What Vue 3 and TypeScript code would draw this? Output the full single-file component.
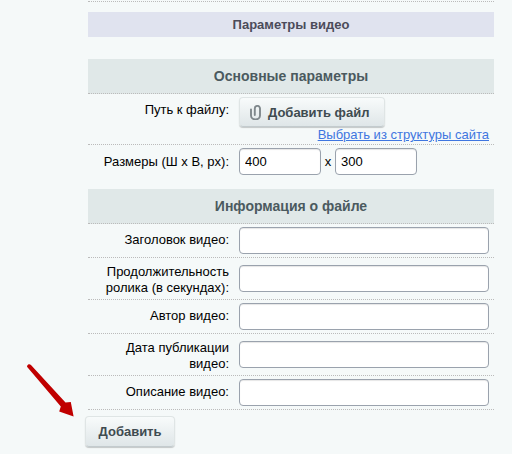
<script setup lang="ts">
const rows: { label: string[]; height: number }[] = [
  { label: ['Заголовок видео:'], height: 34 },
  { label: ['Продолжительность', 'ролика (в секундах):'], height: 42 },
  { label: ['Автор видео:'], height: 34 },
  { label: ['Дата публикации', 'видео:'], height: 42 },
  { label: ['Описание видео:'], height: 34 },
]
</script>

<template>
  <main class="page">
    <section class="form">
      <div class="top-rule"></div>
      <h2 class="title">Параметры видео</h2>
      <h3 class="heading first">Основные параметры</h3>
      <div class="row file-row">
        <div class="label file-label">Путь к файлу:</div>
        <div class="field">
          <button class="btn file-btn" type="button">
            <svg class="clip" width="11" height="15" viewBox="0 0 11 15" fill="none">
              <path d="M1 4.5V10.5a4.5 4 0 0 0 9 0V3.5a2.6 2.6 0 0 0-5.2 0V10" stroke="#7f888c" stroke-width="1.9" stroke-linecap="round" />
            </svg>
            Добавить файл
          </button>
          <a class="link" href="#">Выбрать из структуры сайта</a>
        </div>
      </div>
      <div class="row size-row">
        <div class="label">Размеры (Ш х В, px):</div>
        <div class="field sizes">
          <input class="input small" value="400" />
          <span class="times">x</span>
          <input class="input small" value="300" />
        </div>
      </div>
      <h3 class="heading">Информация о файле</h3>
      <div v-for="row in rows" :key="row.label[0]" class="row info-row" :style="{ height: row.height + 'px' }">
        <div class="label" :class="row.label.length > 1 ? 'double' : 'single'">
          <div v-for="line in row.label" :key="line">{{ line }}</div>
        </div>
        <div class="field">
          <input class="input wide" />
        </div>
      </div>
    </section>
    <button class="btn submit" type="button">Добавить</button>
    <svg class="arrow" width="60" height="62" viewBox="20 358 60 62">
      <path d="M27 366.8 Q27 364.8 28.6 364.3 Q30 364 31.2 365.2 L65.5 402.5 L70.8 402 L73.6 416.4 L59.2 411.4 L60.8 406.6 Z" fill="#c00000" />
    </svg>
  </main>
</template>

<style scoped>
.page {
  position: relative;
  width: 512px;
  height: 454px;
  overflow: hidden;
  background: #f5f9f9;
  font-family: 'Liberation Sans', Arial, sans-serif;
  font-size: 13px;
  color: #000;
}
.form {
  width: 406px;
  margin-left: 88px;
  padding-top: 1px;
}
.top-rule {
  height: 1px;
  border-top: 1px dotted #bbb;
}
.title {
  margin: 9px 0 0;
  height: 25px;
  line-height: 25px;
  background: #e0e3ef;
  color: #4b4b5a;
  font-size: 13px;
  font-weight: bold;
  text-align: center;
}
.heading {
  margin: 0;
  height: 35px;
  line-height: 34px;
  background: #e0e8e8;
  border-bottom: 1px dotted #bbb;
  box-sizing: border-box;
  color: #4b5a5f;
  font-size: 14px;
  font-weight: bold;
  text-align: center;
}
.heading.first {
  margin-top: 22px;
}
.row {
  display: flex;
  align-items: center;
  box-sizing: border-box;
  border-bottom: 1px dotted #bbb;
}
.label {
  width: 141px;
  flex: none;
  text-align: right;
  line-height: 16px;
}
.label.single {
  padding-bottom: 2px;
}
.label.double {
  padding-top: 2px;
}
.field {
  margin-left: 10px;
  flex: 1;
  min-width: 0;
  padding-right: 5px;
}
.file-row {
  height: 51px;
  align-items: flex-start;
}
.file-label {
  margin-top: 8px;
}
.file-row .field {
  display: flex;
  flex-direction: column;
  padding-top: 3px;
}
.link {
  align-self: flex-end;
  line-height: 15px;
  color: #3f76e0;
  font-size: 13px;
  text-decoration: underline;
}
.size-row {
  height: 44px;
  border-bottom: none;
  align-items: flex-start;
  padding-top: 3px;
}
.size-row .label {
  margin-top: 6px;
}
.sizes {
  display: flex;
  align-items: center;
}
.times {
  width: 14px;
  text-align: center;
}
.btn {
  display: block;
  box-sizing: border-box;
  padding: 0;
  border: 1px solid #dfe5e5;
  border-bottom-color: #c3cbce;
  border-radius: 4px;
  background: linear-gradient(#f8fbfb, #dfe6e8);
  box-shadow: 0 1px 1px rgba(0, 0, 0, 0.2);
  font-family: inherit;
  color: #3f4b50;
}
.file-btn {
  width: 146px;
  height: 30px;
  display: flex;
  align-items: center;
  justify-content: flex-start;
  padding-left: 10px;
  gap: 7px;
  font-size: 13px;
  font-weight: bold;
}
.clip {
  flex: none;
}
.input {
  display: block;
  box-sizing: border-box;
  height: 27px;
  padding: 0 5px;
  border: 1px solid #9aa2ad;
  border-radius: 4px;
  background: #fff;
  box-shadow: inset 0 1px 1px rgba(0, 0, 0, 0.1);
  font-family: inherit;
  font-size: 13px;
  color: #000;
  outline: none;
}
.small {
  width: 82px;
}
.wide {
  width: 250px;
}
.submit {
  position: absolute;
  left: 85px;
  top: 416px;
  width: 90px;
  height: 31px;
  font-size: 13px;
  font-weight: bold;
}
.arrow {
  position: absolute;
  left: 20px;
  top: 358px;
}
</style>
